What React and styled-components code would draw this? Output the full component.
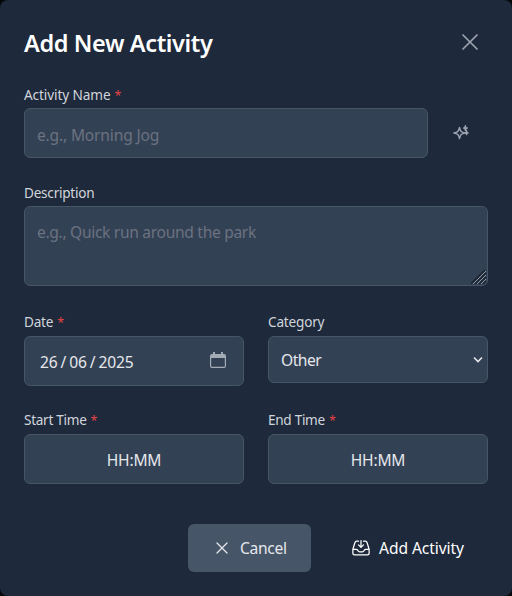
import React from 'react';
import styled, { createGlobalStyle } from 'styled-components';

const GlobalStyle = createGlobalStyle`
  * { box-sizing: border-box; }
  body { margin: 0; background: #05070b; }
  body, button, input, textarea { font-family: "Noto Sans", "Open Sans", sans-serif; }
`;

const Dialog = styled.form`
  display: flex;
  flex-direction: column;
  width: 512px;
  height: 596px;
  padding: 24px;
  border-radius: 8px;
  background: #1e293b;
  color: #e5e7eb;
`;

const Header = styled.header`
  display: flex;
  align-items: center;
  justify-content: space-between;
  height: 36px;
  margin-bottom: 24px;
`;

const Title = styled.h2`
  margin: 2px 0 0;
  color: #fff;
  font-size: 23.5px;
  font-weight: 600;
  line-height: 32px;
  letter-spacing: ${(p) => p.$track}px;
  white-space: nowrap;
`;

const IconButton = styled.button`
  display: flex;
  padding: 4px;
  border: 0;
  background: none;
  color: #9ca3af;
`;

const Field = styled.div`
  display: flex;
  flex-direction: column;
  gap: 4px;
  flex: 1;
  min-width: 0;
`;

const Label = styled.label`
  height: 20px;
  color: #d1d5db;
  font-size: 13.6px;
  line-height: ${(p) => p.$line || 19}px;
  letter-spacing: ${(p) => p.$track || 0}px;
  white-space: nowrap;
`;

const Required = styled.span`
  color: #ef4444;
  margin-left: 4px;
  font-family: "Open Sans", sans-serif;
  font-size: 12.5px;
`;

const Row = styled.div`
  display: flex;
  align-items: flex-start;
  gap: ${(p) => p.$gap || 24}px;
  margin-bottom: ${(p) => p.$bottom}px;
`;

const Control = styled.div`
  display: flex;
  align-items: center;
  width: 100%;
  height: ${(p) => p.$height || 50}px;
  padding: ${(p) => p.$padding || '2px 12px 0'};
  justify-content: ${(p) => p.$justify || 'space-between'};
  border: 1px solid #475569;
  border-radius: 6px;
  background: #334155;
  font-size: 15.6px;
  line-height: 24px;
  white-space: nowrap;
`;

const TextInput = styled(Control).attrs({ as: 'input', type: 'text' })`
  outline: none;
  padding-top: 3px;
  letter-spacing: ${(p) => p.$track}px;
  &::placeholder { color: #6b7280; opacity: 1; }
`;

const AreaWrap = styled.div`
  position: relative;
  display: flex;
`;

const TextArea = styled(Control).attrs({ as: 'textarea' })`
  display: block;
  height: 80px;
  padding: 13px 12px;
  resize: none;
  outline: none;
  overflow: hidden;
  white-space: normal;
  letter-spacing: ${(p) => p.$track}px;
  &::placeholder { color: #6b7280; opacity: 1; }
`;

const Grip = styled.svg`
  position: absolute;
  right: 1px;
  bottom: 1px;
`;

const Magic = styled(IconButton)`
  width: 52px;
  height: 48px;
  margin-top: 25px;
  padding: 0;
  align-items: center;
  justify-content: center;
`;

const Value = styled.span`
  letter-spacing: ${(p) => p.$track || 0}px;
`;

const DateParts = styled.span`
  display: flex;
  gap: 3px;
  padding-top: 2px;
  letter-spacing: ${(p) => p.$track}px;
`;

const Footer = styled.footer`
  display: flex;
  justify-content: flex-end;
  gap: 16px;
`;

const Button = styled.button`
  display: flex;
  align-items: center;
  gap: 8px;
  width: ${(p) => p.$width}px;
  height: 48px;
  padding: 0 0 0 24px;
  border: 0;
  border-radius: 6px;
  background: ${(p) => (p.$filled ? '#475569' : 'transparent')};
  color: ${(p) => (p.$filled ? '#e5e7eb' : '#fff')};
  font-size: 15.6px;
  line-height: 24px;
  letter-spacing: ${(p) => p.$track}px;
  white-space: nowrap;
  svg { flex: none; }
`;

const Outline = ({ size, children, stroke = 1.5 }) => (
  <svg width={size} height={size} viewBox="0 0 24 24" fill="none" stroke="currentColor"
    strokeWidth={stroke} strokeLinecap="round" strokeLinejoin="round">
    {children}
  </svg>
);

const Close = ({ size }) => (
  <Outline size={size}><path d="M6 18 18 6M6 6l12 12" /></Outline>
);

const Sparkles = () => (
  <Outline size={20} stroke={1.7}>
    <path d="M9.813 15.904 9 18.750l-.813-2.846a4.5 4.5 0 0 0-3.09-3.09L2.250 12l2.847-.813a4.5 4.5 0 0 0 3.09-3.09L9 5.250l.813 2.847a4.5 4.5 0 0 0 3.09 3.09L15.750 12l-2.847.813a4.5 4.5 0 0 0-3.09 3.090Z" />
    <path d="m16 3.200.5 2.300 1.800.5-1.800.6-.5 2.100-.5-2.100-1.500-.6 1.500-.5ZM17.500 9.500l.5 1.800 1.300.5-1.300.6-.5 1.500-.5-1.500-1.500-.6 1.500-.5ZM16.500 7.500l1 3" />
  </Outline>
);

const InboxDown = () => (
  <Outline size={20}>
    <path d="M9 3.75H6.912a2.25 2.25 0 0 0-2.15 1.588L2.35 13.177a2.25 2.25 0 0 0-.1.661V18a2.25 2.25 0 0 0 2.25 2.25h15A2.25 2.25 0 0 0 21.75 18v-4.162c0-.224-.034-.447-.1-.661L19.24 5.338a2.25 2.25 0 0 0-2.15-1.588H15M2.25 13.5h3.86a2.25 2.25 0 0 1 2.012 1.244l.256.512a2.25 2.25 0 0 0 2.013 1.244h3.218a2.25 2.25 0 0 0 2.013-1.244l.256-.512a2.25 2.25 0 0 1 2.013-1.244h3.859M12 3v8.25m0 0-3-3m3 3 3-3" />
  </Outline>
);

const Calendar = () => (
  <svg width="18" height="18" viewBox="0 0 18 18" fill="#a3abb5">
    <path fillRule="evenodd" d="M4 0h2v2h6V0h2v2h1a2 2 0 0 1 2 2v10a2 2 0 0 1-2 2H3a2 2 0 0 1-2-2V4a2 2 0 0 1 2-2h1ZM2.200 6v8q0 .8.8.8h12q.8 0 .8-.8V6Z" />
  </svg>
);

export default function App() {
  return (
    <>
      <GlobalStyle />
      <Dialog>
        <Header>
          <Title $track={-0.38}>Add New Activity</Title>
          <IconButton type="button" aria-label="Close"><Close size={28} /></IconButton>
        </Header>

        <Row $gap={8} $bottom={24}>
          <Field>
            <Label $line={21} $track={-0.1}>Activity Name<Required>*</Required></Label>
            <TextInput placeholder="e.g., Morning Jog" $track={-0.18} />
          </Field>
          <Magic type="button" aria-label="Suggest"><Sparkles /></Magic>
        </Row>

        <Row $bottom={26}>
          <Field>
            <Label $line={21} $track={-0.25}>Description</Label>
            <AreaWrap>
              <TextArea placeholder="e.g., Quick run around the park" $track={-0.32} />
              <Grip width="16" height="16" viewBox="0 0 16 16">
                <path d="M0 15 14 1M4 15 15 4M8 15l7-7M12 15l3-3" stroke="#1b2431" strokeWidth="1.6" />
                <path d="M2 15 15 2M6 15l9-9M10 15l5-5" stroke="#8d97a4" strokeWidth="1" />
              </Grip>
            </AreaWrap>
          </Field>
        </Row>

        <Row $bottom={24}>
          <Field>
            <Label $track={-0.25}>Date<Required>*</Required></Label>
            <Control $padding="0 16px 0 15px">
              <DateParts $track={-0.15}><span>26</span><span>/</span><span>06</span><span>/</span><span>2025</span></DateParts>
              <Calendar />
            </Control>
          </Field>
          <Field>
            <Label $track={-0.2}>Category</Label>
            <Control $height={47} $padding="0 4px 0 12px">
              <Value $track={-0.5}>Other</Value>
              <svg width="10" height="8" viewBox="0 0 10 8" fill="none" stroke="#e5e7eb" strokeWidth="1.6">
                <path d="m1 1.500 4 4 4-4" />
              </svg>
            </Control>
          </Field>
        </Row>

        <Row $bottom={40}>
          <Field>
            <Label $track={-0.3}>Start Time<Required>*</Required></Label>
            <Control $justify="center"><Value $track={-0.2}>HH:MM</Value></Control>
          </Field>
          <Field>
            <Label $track={-0.3}>End Time<Required>*</Required></Label>
            <Control $justify="center"><Value $track={-0.2}>HH:MM</Value></Control>
          </Field>
        </Row>

        <Footer>
          <Button type="button" $filled $width={123} $track={-0.3}><Close size={20} /><span>Cancel</span></Button>
          <Button type="button" $width={161} $track={-0.08}><InboxDown /><span>Add Activity</span></Button>
        </Footer>
      </Dialog>
    </>
  );
}
